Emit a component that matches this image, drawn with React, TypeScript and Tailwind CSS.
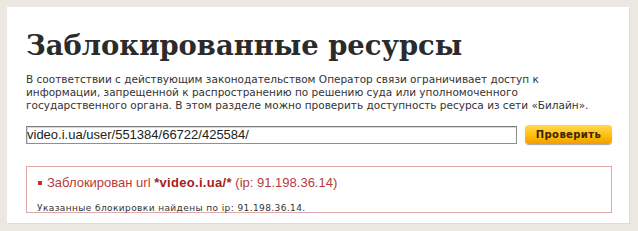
export default function App() {
  return (
    <div className="w-[638px] h-[231px] bg-[#ebe8e2] pt-[7px] pl-[7px]">
      <div className="w-[622px] h-[216px] bg-white shadow-[1px_1px_0_#e0ddd6] pl-[19px] pt-[21px]">
        <h1 className="font-['DejaVu_Serif',serif] font-bold text-[27.4px] leading-[34px] text-[#2b2b2b]">
          Заблокированные ресурсы
        </h1>
        <p className="mt-[11px] font-['DejaVu_Sans',sans-serif] text-[10.5px] leading-[13px] text-[#333] w-[600px]">
          В соответствии с действующим законодательством Оператор связи ограничивает доступ к
          <br />
          информации, запрещенной к распространению по решению суда или уполномоченного
          <br />
          государственного органа. В этом разделе можно проверить доступность ресурса из сети «Билайн».
        </p>
        <div className="mt-[13px] flex items-center gap-[8px]">
          <input
            readOnly
            value="video.i.ua/user/551384/66722/425584/"
            className="w-[491px] h-[18px] border border-[#8f8f8f] border-t-[#7a7a7a] shadow-[inset_1px_1px_0_#d8d8d8] font-['Liberation_Sans',sans-serif] text-[13px] text-[#222] px-0 outline-none"
          />
          <button className="w-[87px] h-[19px] rounded-[4px] bg-gradient-to-b from-[#ffd84a] via-[#ffc20e] to-[#f39c00] shadow-[0_1px_1px_rgba(0,0,0,0.35)] font-['DejaVu_Sans',sans-serif] font-bold text-[10px] tracking-[0.4px] text-[#3a2600]">
            Проверить
          </button>
        </div>
        <div className="mt-[22px] w-[586px] h-[47px] border border-[#e0a8a8] pl-[11px] pt-[6px]">
          <div className="flex items-center font-['Liberation_Sans',sans-serif] text-[13px] text-[#b43c3c]">
            <span className="w-[4px] h-[4px] bg-[#c03030] mr-[5px]" />
            <span>
              Заблокирован url <b className="text-[#a51d1d] tracking-[0.3px]">*video.i.ua/*</b> (ip: 91.198.36.14)
            </span>
          </div>
          <div className="mt-[9px] ml-[-1px] font-['DejaVu_Sans',sans-serif] text-[9px] tracking-[0.4px] text-[#333]">
            Указанные блокировки найдены по ip: 91.198.36.14.
          </div>
        </div>
      </div>
    </div>
  );
}
